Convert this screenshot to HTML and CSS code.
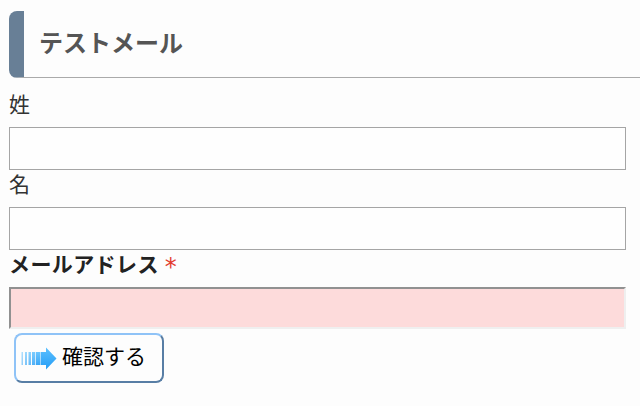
FILE: index.html
```html
<!DOCTYPE html>
<html lang="ja">
<head>
  <meta charset="UTF-8">
  <title>テストメール</title>
  <link rel="stylesheet" href="styles.css">
</head>
<body>
  <h1 class="title"><span>テストメール</span></h1>
  <form class="mail-form">
    <label for="sei">姓</label>
    <input type="text" id="sei" class="field">

    <label for="mei">名</label>
    <input type="text" id="mei" class="field">

    <label for="mail" class="must">メールアドレス<span class="required">*</span></label>
    <input type="text" id="mail" class="field field-must">

    <button type="button" class="confirm">
      <svg class="arrow" width="36" height="24" viewBox="0 0 36 24">
        <defs>
          <linearGradient id="blue" x1="0" y1="0" x2="0" y2="1">
            <stop offset="0" stop-color="#5cc0ff"/>
            <stop offset="1" stop-color="#259df5"/>
          </linearGradient>
        </defs>
        <g fill="url(#blue)">
          <rect x="0.5" y="6" width="1.5" height="13" opacity=".5"/>
          <rect x="4" y="6" width="2" height="13" opacity=".6"/>
          <rect x="7.5" y="6" width="2.5" height="13" opacity=".7"/>
          <rect x="11" y="6" width="3.3" height="13" opacity=".8"/>
          <rect x="15" y="6" width="4.5" height="13" opacity=".9"/>
          <path d="M20 6H25V1.5L35.5 12.5L25 23.5V19H20Z"/>
        </g>
      </svg>
      <span class="confirm-text">確認する</span>
    </button>
  </form>
</body>
</html>
```

FILE: styles.css
```css
* {
  box-sizing: border-box;
}

body {
  margin: 0;
  padding: 11px 0 0 9px;
  background: #fdfdfd;
  color: #333;
  font-family: "Noto Sans CJK JP", sans-serif;
  font-size: 21px;
  overflow: hidden;
}

.title {
  display: flex;
  align-items: center;
  height: 67px;
  margin: 0 0 11px;
  padding: 0 0 6px 15px;
  border-left: 15px solid #687f96;
  border-bottom: 1px solid #aaa;
  border-radius: 8px 0 0 8px;
  color: #555;
  font-size: 24px;
  font-weight: bold;
}

.mail-form {
  display: flex;
  flex-direction: column;
  align-items: flex-start;
}

label {
  height: 38px;
  line-height: 28px;
}

.field {
  width: 617px;
  height: 43px;
  margin: 0;
  padding: 0 8px;
  border: 1px solid #a5a5a5;
  background: #fefefe;
  font-size: 21px;
}

.field + label {
  height: 37px;
  line-height: 26px;
}

.must {
  color: #222;
  font-weight: bold;
  letter-spacing: 0.4px;
}

.required {
  margin-left: 6px;
  color: #e33b2e;
  font-family: "DejaVu Sans", sans-serif;
  font-size: 24px;
  font-weight: normal;
  line-height: 1;
  vertical-align: -3px;
}

.field-must {
  height: 42px;
  border: 2px solid;
  border-color: #919191 #efefef #efefef #919191;
  background: #fddbdb;
}

.confirm {
  display: flex;
  align-items: center;
  gap: 5px;
  width: 150px;
  height: 50px;
  margin: 4px 0 0 5px;
  padding: 0 0 0 5px;
  border: 2px solid;
  border-color: #8fc3f7 #587ea5 #587ea5 #8fc3f7;
  border-radius: 8px;
  background: #fdfdfd;
  color: #000;
  font-family: inherit;
  font-size: 21px;
}

.confirm-text {
  padding-bottom: 6px;
}
```
